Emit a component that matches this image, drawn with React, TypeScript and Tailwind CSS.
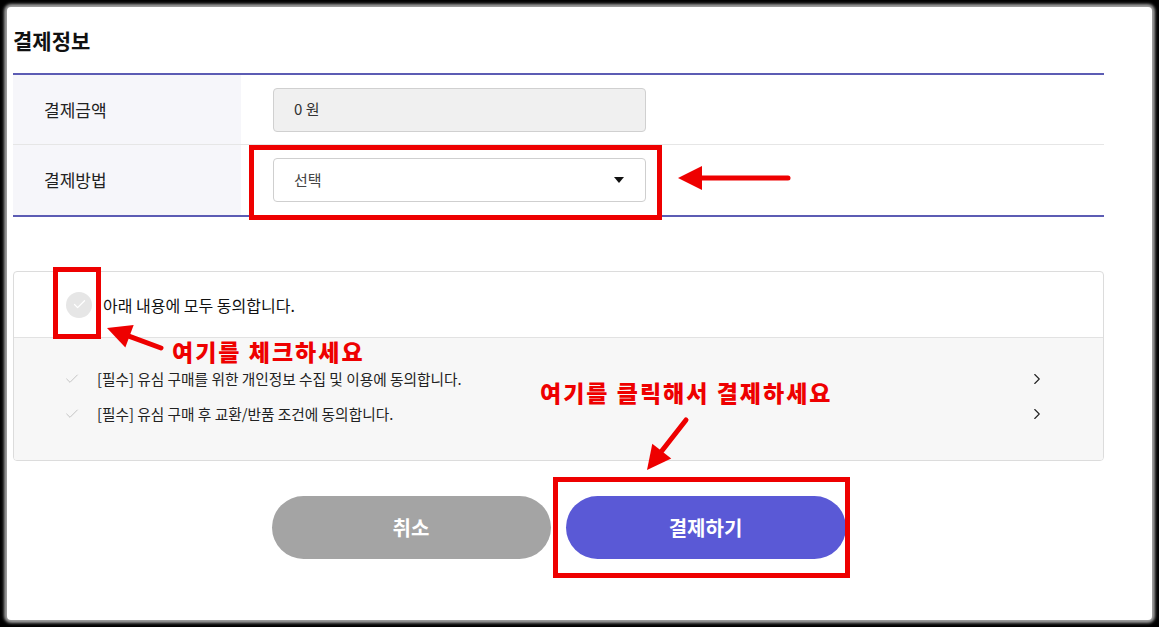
import React from 'react';
import { Check, ChevronRight } from 'lucide-react';

const font = { fontFamily: '"Noto Sans CJK KR", "Noto Sans", sans-serif' };

const RedArrow = ({ x1, y1, x2, y2 }: { x1: number; y1: number; x2: number; y2: number }) => {
  // arrow from (x1,y1) tail to (x2,y2) tip
  const a = Math.atan2(y2 - y1, x2 - x1);
  const len = 24;
  const w = 12;
  const bx = x2 - Math.cos(a) * len;
  const by = y2 - Math.sin(a) * len;
  const px = -Math.sin(a) * w;
  const py = Math.cos(a) * w;
  return (
    <g>
      <line x1={x1} y1={y1} x2={bx} y2={by} stroke="#ee0000" strokeWidth={5} strokeLinecap="round" />
      <polygon points={`${x2},${y2} ${bx + px},${by + py} ${bx - px},${by - py}`} fill="#ee0000" />
    </g>
  );
};

const App = () => {
  return (
    <div className="w-[1159px] h-[627px] bg-black p-[7px]" style={font}>
      <div className="relative h-full w-full bg-white rounded-[4px] shadow-[0_0_3px_3px_rgba(200,200,200,0.8)] pl-[6px] pr-[48px]">
        {/* Title */}
        <h2 className="pt-[19px] pb-[19px] text-[21px] leading-[28px] font-bold text-[#111]">결제정보</h2>

        {/* Payment table */}
        <div className="border-t-2 border-b-2 border-[#5c5cb4]">
          <div className="flex h-[70px] border-b border-[#e6e6e6]">
            <div className="w-[228px] bg-[#f6f6fa] flex items-center pl-[31px] text-[17px] text-[#222]">결제금액</div>
            <div className="flex-1 flex items-center pl-[32px]">
              <div className="w-[373px] h-[44px] bg-[#f0f0f0] border border-[#d0d0d0] rounded-[4px] flex items-center pl-[20px] text-[15px] text-[#333]">
                0 원
              </div>
            </div>
          </div>
          <div className="flex h-[70px]">
            <div className="w-[228px] bg-[#f6f6fa] flex items-center pl-[31px] text-[17px] text-[#222]">결제방법</div>
            <div className="flex-1 flex items-center pl-[32px]">
              <div className="w-[373px] h-[44px] bg-white border border-[#cfcfcf] rounded-[4px] flex items-center justify-between pl-[20px] pr-[21px] text-[15px] text-[#444]">
                <span>선택</span>
                <span className="w-0 h-0 border-l-[5px] border-r-[5px] border-t-[6px] border-l-transparent border-r-transparent border-t-[#111]" />
              </div>
            </div>
          </div>
        </div>

        {/* Agreement box */}
        <div className="mt-[54px] border border-[#dcdcdc] rounded-[4px] overflow-hidden">
          <div className="h-[66px] flex items-center pl-[52px] border-b border-[#e2e2e2]">
            <span className="w-[26px] h-[26px] rounded-full bg-[#e6e6e6] flex items-center justify-center">
              <Check size={15} strokeWidth={2} className="text-white" />
            </span>
            <span className="ml-[11px] text-[16px] text-[#111]">아래 내용에 모두 동의합니다.</span>
          </div>
          <div className="bg-[#f7f7f7] h-[122px] pt-[30px] pl-[50px] pr-[57px] flex flex-col gap-[13px]">
            <div className="flex items-center h-[22px]">
              <Check size={16} strokeWidth={1.5} className="text-[#c4c4c4]" />
              <span className="ml-[17px] flex-1 text-[14.7px] text-[#222]">[필수] 유심 구매를 위한 개인정보 수집 및 이용에 동의합니다.</span>
              <ChevronRight size={18} strokeWidth={1.5} className="text-[#222]" />
            </div>
            <div className="flex items-center h-[22px]">
              <Check size={16} strokeWidth={1.5} className="text-[#c4c4c4]" />
              <span className="ml-[17px] flex-1 text-[14.7px] text-[#222]">[필수] 유심 구매 후 교환/반품 조건에 동의합니다.</span>
              <ChevronRight size={18} strokeWidth={1.5} className="text-[#222]" />
            </div>
          </div>
        </div>

        {/* Buttons */}
        <div className="mt-[35px] flex justify-center gap-[15px]">
          <button className="w-[279px] h-[63px] rounded-full bg-[#a4a4a4] text-white text-[20px] font-bold">취소</button>
          <button className="w-[280px] h-[63px] rounded-full bg-[#5a59d6] text-white text-[20px] font-bold">결제하기</button>
        </div>

        {/* Annotations */}
        <div className="absolute left-[242px] top-[138px] w-[413px] h-[75px] border-[5px] border-[#ee0000]" />
        <div className="absolute left-[46px] top-[260px] w-[48px] h-[72px] border-[5px] border-[#ee0000]" />
        <div className="absolute left-[546px] top-[470px] w-[297px] h-[101px] border-[5px] border-[#ee0000]" />
        <span className="absolute left-[165px] top-[328px] text-[23px] leading-[32px] font-black text-[#ee0000] tracking-[2px]">여기를 체크하세요</span>
        <span className="absolute left-[533px] top-[369px] text-[23px] leading-[32px] font-black text-[#ee0000] tracking-[2px]">여기를 클릭해서 결제하세요</span>
        <svg className="absolute left-[-7px] top-[-7px] pointer-events-none" width={1159} height={627}>
          <RedArrow x1={788} y1={178} x2={678} y2={178} />
          <RedArrow x1={161} y1={348} x2={107} y2={328} />
          <RedArrow x1={686} y1={420} x2={647} y2={470} />
        </svg>
      </div>
    </div>
  );
};

export default App;
